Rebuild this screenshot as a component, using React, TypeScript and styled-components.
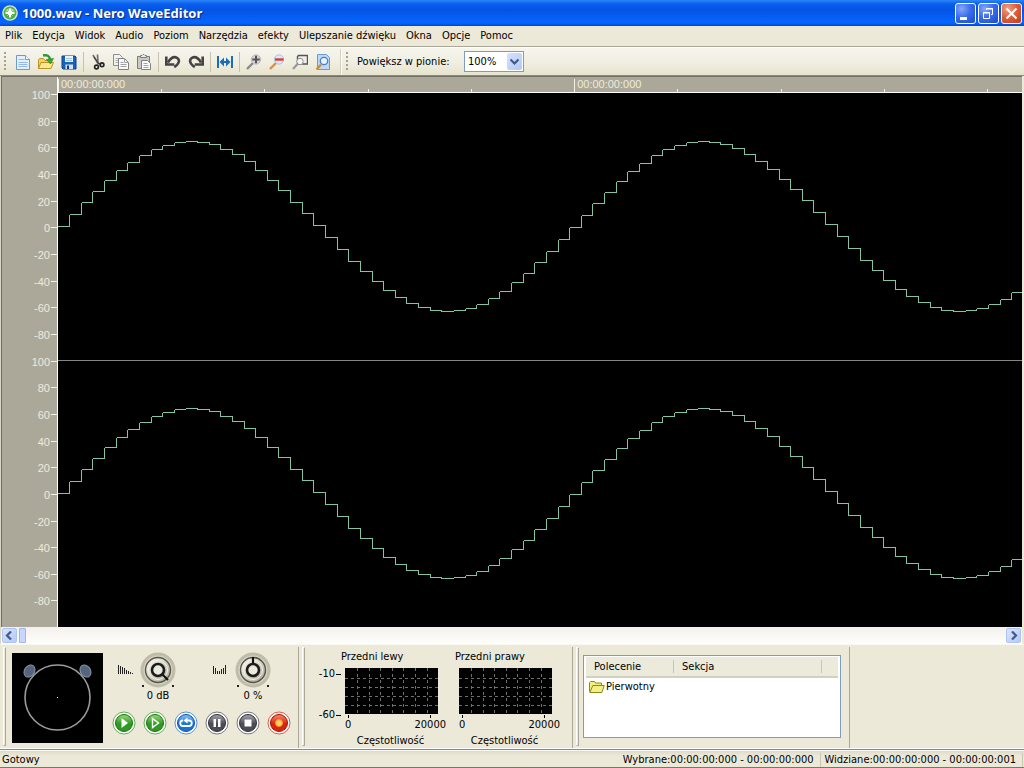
import React from 'react';
import styled, { createGlobalStyle, css } from 'styled-components';

const face = '#ece9d8';
const shade = '#aca899';

const GlobalStyle = createGlobalStyle`
  *, *::before, *::after { box-sizing: border-box; }
  html, body { margin: 0; padding: 0; }
  body {
    background: ${face};
    color: #000;
    font-family: "DejaVu Sans Condensed", "DejaVu Sans", sans-serif;
    font-size: 11px;
    line-height: 14px;
  }
  button, select, input { font: inherit; color: inherit; margin: 0; padding: 0; }
  svg { display: block; }
`;

const Window = styled.div`
  display: flex;
  flex-direction: column;
  min-height: 100vh;
  background: ${face};
  border-bottom: 2px solid #3f80cf;
`;

/* ---------- title bar ---------- */

const TitleBar = styled.header`
  display: flex;
  align-items: center;
  gap: 4px;
  height: 26px;
  padding: 0 2px;
  background: linear-gradient(#2a86f8 0, #0a5fee 4px, #0454e2 10px, #0560f8 18px, #0665ff 23px, #0048c8 26px);
`;

const Title = styled.h1`
  flex: 1;
  margin: 0;
  color: #fff;
  font: bold 13px/18px "Noto Sans", sans-serif;
  text-shadow: 1px 1px 1px #0a2a80;
`;

const CaptionButtons = styled.div`
  display: flex;
  gap: 2px;
`;

const CaptionButton = styled.button<{ $close?: boolean }>`
  width: 21px;
  height: 21px;
  border: 1px solid #fff;
  border-radius: 3px;
  background: ${p => p.$close
    ? 'radial-gradient(circle at 30% 25%, #f0a088 0, #e0603c 45%, #c03a14 100%)'
    : 'radial-gradient(circle at 30% 25%, #84a8f8 0, #3c6cea 45%, #1a48d0 100%)'};
`;

/* ---------- menu ---------- */

const MenuBar = styled.nav`
  display: flex;
  height: 21px;
  padding: 3px 0 0 5px;
  gap: 10px;
  border-bottom: 1px solid ${shade};
`;

const MenuItem = styled.button`
  border: 0;
  background: none;
  height: 14px;
  white-space: nowrap;
`;

/* ---------- toolbar ---------- */

const ToolBar = styled.div`
  display: flex;
  align-items: center;
  height: 29px;
  border-top: 1px solid #fff;
  border-bottom: 1px solid #8c897a;
  background: linear-gradient(#f6f5ee, #f0eee0 55%, #e6e3cd);
`;

const Grip = styled.span`
  width: 2px;
  height: 20px;
  margin: 0 5px 0 4px;
  background: repeating-linear-gradient(#a5a291 0 2px, transparent 2px 4px);
`;

const ToolButton = styled.button`
  display: flex;
  justify-content: center;
  align-items: center;
  width: 23px;
  height: 22px;
  border: 0;
  background: none;
`;

const ToolSeparator = styled.span`
  width: 1px;
  height: 20px;
  margin: 0 2px 0 3px;
  background: #c5c2b0;
`;

const ToolEnd = styled.span`
  width: 2px;
  height: 26px;
  margin-left: 6px;
  background: linear-gradient(90deg, #d3d0bf 50%, #fff 50%);
`;

const ZoomLabel = styled.label`
  margin-left: 4px;
  width: 107px;
`;

const SelectBox = styled.span`
  position: relative;
  width: 60px;
  height: 21px;
`;

const Select = styled.select`
  appearance: none;
  width: 100%;
  height: 100%;
  padding-left: 3px;
  border: 1px solid #7f9db9;
  border-radius: 0;
  background: #fff;
`;

const SelectArrow = styled.span`
  position: absolute;
  right: 2px;
  top: 2px;
  display: grid;
  place-items: center;
  width: 15px;
  height: 17px;
  border-radius: 2px;
  background: linear-gradient(135deg, #d6e2fe, #b3c8f6);
  pointer-events: none;
`;

/* ---------- wave editor ---------- */

const Editor = styled.main`
  flex: 1;
  display: flex;
  flex-direction: column;
  margin-right: 2px;
  border-left: 1px solid #d8d5c5;
`;

const Tracks = styled.div`
  flex: 1;
  display: flex;
  border-left: 1px solid #716f64;
  background: ${shade};
  border-top: 1px solid #716f64;
`;

const Axis = styled.div`
  display: flex;
  flex-direction: column;
  width: 55px;
  padding: 11px 0 6px;
  color: #eeebdc;
  font: 11px/14px "Liberation Sans", sans-serif;
`;

const AxisLabel = styled.div`
  flex: 1;
  min-height: 14px;
  display: flex;
  justify-content: flex-end;
  align-items: flex-start;
  gap: 1px;

  &::after {
    content: '';
    width: 6px;
    height: 1px;
    margin-top: 6px;
    background: #f4f2e6;
  }
`;

const TrackArea = styled.div`
  flex: 1;
  display: flex;
  flex-direction: column;
  border-left: 1px solid #fff;
`;

const Ruler = styled.div`
  display: flex;
  align-items: flex-end;
  height: 16px;
  overflow: hidden;
  border-bottom: 1px solid #fff;
  color: #eeebdc;
  font: 11px/10px "Liberation Sans", sans-serif;
`;

const RulerCell = styled.div<{ $major?: boolean }>`
  flex: 0 0 10.71%;
  height: ${p => (p.$major ? 13 : 3)}px;
  padding-left: 2px;
  border-left: 1px solid #f4f2e6;
  white-space: nowrap;
`;

const WaveView = styled.div`
  flex: 1;
  display: flex;
  min-height: 240px;
  background: #000;

  svg { width: 100%; height: auto; }
`;

const ScrollBar = styled.div`
  display: flex;
  align-items: center;
  height: 17px;
  padding: 0 1px;
  background: linear-gradient(#f3f1ec, #fefefb);
`;

const ScrollButton = styled.button`
  display: grid;
  place-items: center;
  width: 15px;
  height: 15px;
  border: 1px solid #b0c4f4;
  border-radius: 2px;
  background: linear-gradient(135deg, #d8e3fe, #b5caf8);
`;

const ScrollTrack = styled.div`
  flex: 1;
  padding-left: 2px;
`;

const ScrollThumb = styled.div`
  width: 7px;
  height: 15px;
  border: 1px solid #9cb6ec;
  border-radius: 1px;
  background: #c8d8fc;
`;

/* ---------- bottom panels ---------- */

const Dock = styled.footer`
  display: flex;
  height: 106px;
  padding: 2px 0 1px;
  border-top: 1px solid #f8f7f0;
  border-bottom: 1px solid #8c897a;
  box-shadow: inset 0 -1px 0 #fff;
`;

const Panel = styled.section<{ $width: number }>`
  display: flex;
  flex: 0 0 ${p => p.$width}px;
  border-right: 1px solid ${shade};

  &::before {
    content: '';
    width: 3px;
    height: 99px;
    margin-left: 3px;
    border: 1px solid;
    border-color: #fff ${shade} ${shade} #fff;
  }
`;

const ScopeBox = styled.div`
  margin: 6px 0 0 6px;
  width: 91px;
  height: 90px;
  background: #000;
`;

const Transport = styled.div`
  margin-left: 5px;
  width: 187px;
`;

const Knobs = styled.div`
  display: flex;
  gap: 36px;
  padding: 5px 0 0 9px;
  height: 64px;
`;

const KnobField = styled.label`
  display: grid;
  grid-template-columns: 17px 36px;
  grid-template-rows: 36px 16px;
  column-gap: 6px;
  align-items: center;
`;

const KnobDial = styled.span`
  position: relative;
  display: block;
  width: 36px;
  height: 36px;

  input {
    position: absolute;
    inset: 0;
    width: 100%;
    height: 100%;
    opacity: 0;
  }
`;

const KnobValue = styled.span`
  grid-column: 2;
  text-align: center;
  white-space: nowrap;
`;

const TransportButtons = styled.div`
  display: flex;
`;

const RoundButton = styled.button`
  display: grid;
  place-items: center;
  width: 31px;
  height: 24px;
  border: 0;
  background: none;
`;

const Spectra = styled.div`
  display: flex;
  padding: 3px 0 0 7px;
`;

const LevelScale = styled.div`
  display: flex;
  flex-direction: column;
  justify-content: space-between;
  width: 29px;
  height: 55px;
  margin-top: 17px;
`;

const Level = styled.div`
  display: flex;
  justify-content: flex-end;
  align-items: center;
  gap: 1px;

  &::after {
    content: '';
    width: 5px;
    height: 1px;
    background: #000;
  }
`;

const Figure = styled.figure`
  width: 105px;
  margin: 0 9px 0 0;
`;

const FigureTitle = styled.div`
  height: 18px;
  white-space: nowrap;
`;

const Plot = styled.div`
  width: 93px;
  margin-left: 4px;
`;

const FrequencyScale = styled.div`
  display: flex;
  justify-content: space-between;
  padding: 1px 0 0 4px;
`;

const Frequency = styled.span`
  display: flex;
  flex-direction: column;
  align-items: center;
  line-height: 13px;

  &::before {
    content: '';
    width: 1px;
    height: 3px;
    background: #000;
  }
`;

const Caption = styled.figcaption`
  width: 99px;
  text-align: center;
  line-height: 20px;
`;

const HistoryBox = styled.div`
  width: 258px;
  height: 83px;
  margin: 8px 0 0 4px;
  padding: 1px 2px;
  border: 1px solid #7f9db9;
  background: #fff;
`;

const HistoryTable = styled.table`
  width: 100%;
  table-layout: fixed;
  border-collapse: collapse;

  th {
    height: 20px;
    padding: 0 0 0 8px;
    text-align: left;
    font-weight: normal;
    background: linear-gradient(90deg, transparent calc(100% - 1px), #c9c6b4 0) 0 3px / 100% 13px no-repeat, #ebeadb;
    border-bottom: 2px solid #d3d0bf;
  }
  th:last-child { background: #ebeadb; }
  td { padding: 1px 0 0 3px; }
`;

const Entry = styled.span`
  display: flex;
  align-items: center;
  gap: 1px;
  height: 16px;
`;

/* ---------- status bar ---------- */

const StatusBar = styled.div`
  display: flex;
  align-items: center;
  height: 17px;
  padding: 2px 1px 0 2px;
  border-top: 1px solid #f8f7f0;
  background: linear-gradient(#dedbca, ${face} 5px);
`;

const StatusText = styled.span<{ $grow?: boolean }>`
  white-space: nowrap;
  ${p => p.$grow
    ? css`flex: 1;`
    : css`
        padding: 0 6px 0 4px;
        border-right: 1px solid #c9c6b4;
      `}
`;

/* ---------- tool icons ---------- */

const Icon = ({ children }: { children: React.ReactNode }) => (
  <svg width="16" height="16" viewBox="0 0 16 16" fill="none" aria-hidden="true">{children}</svg>
);

const NewIcon = () => (
  <Icon>
    <path d="M1.5 1.5h9l4 4v10h-13z" fill="#e4f0fe" stroke="#6d9bd0" />
    <path d="M10.5 1.5v4h4" fill="#fff" stroke="#6d9bd0" />
    <path d="M3.5 5.5h6M3.5 8.5h9M3.5 10.5h9M3.5 12.5h9" stroke="#92bbe8" />
  </Icon>
);

const OpenIcon = () => (
  <Icon>
    <path d="M.5 14.5v-9l1-1h4l1.5 2h6v3" fill="#f2d45c" stroke="#b8922a" />
    <path d="M.5 14.5 3 8.5h12.5l-2.5 6z" fill="#fbe98c" stroke="#b8922a" />
    <path d="M5 1.5c4-1 6.5 .5 7 4" stroke="#2f9a2c" strokeWidth="2.4" />
    <path d="m8.5 5.5 4 4.5 3-5.5z" fill="#3aa836" stroke="#1e7a1e" strokeWidth=".6" />
  </Icon>
);

const SaveIcon = () => (
  <Icon>
    <path d="M1 2h13l1 1v12H2l-1-1z" fill="#1763b8" stroke="#0d4488" />
    <path d="M4 2h8v6H4z" fill="#eaf4ff" />
    <path d="M5 4.5h6M5 6.5h6" stroke="#9bc0e6" />
    <path d="M4.5 10.5h7.500V15H4.500z" fill="#d4e2f0" />
    <path d="M6 11.5h2V15H6z" fill="#0d3a78" />
  </Icon>
);

const CutIcon = () => (
  <Icon>
    <path d="m3 1 5.5 9.500M7.500 .5 8 10M8 9l3.500 1.500" stroke="#6d6d6d" strokeWidth="1.7" />
    <path d="m4 3 5 7" stroke="#333" strokeWidth="1" />
    <circle cx="6.5" cy="13" r="1.9" stroke="#222" strokeWidth="1.6" />
    <circle cx="12" cy="10.8" r="1.9" stroke="#222" strokeWidth="1.6" />
  </Icon>
);

const CopyIcon = () => (
  <Icon>
    <path d="M.5 .5h6l3 3v8h-9z" fill="#f2f2f0" stroke="#8d8d8d" />
    <path d="M2.5 4.5h5M2.5 6.5h5M2.5 8.5h5" stroke="#b0b0b0" />
    <path d="M5.5 4.5h6l4 4v7h-10z" fill="#fafafa" stroke="#808080" />
    <path d="M11.5 4.5v4h4M7.5 8.5h3M7.5 10.5h6M7.5 12.5h6" stroke="#a0a0a0" />
  </Icon>
);

const PasteIcon = () => (
  <Icon>
    <path d="M1.5 2.5h12v12h-12z" fill="#c9c9c6" stroke="#7c7c7c" />
    <path d="M4.5 3.5v-2h1.5l1-1h1l1 1h1.5v2z" fill="#eee" stroke="#7c7c7c" />
    <path d="M5.5 6.5h6l3 3v6h-9z" fill="#fbfbfb" stroke="#808080" />
    <path d="M7.5 9.5h4M7.5 11.5h5M7.5 13.5h5" stroke="#a6a6a6" />
  </Icon>
);

const UndoShape = () => (
  <>
    <path d="M3 8.5C6 3.5 9.5 2.5 12 3.8c3.2 1.9 2.4 6.2-2.8 9.2" stroke="#444" strokeWidth="2.6" />
    <path d="M1.3 2.5v8h8" stroke="#444" strokeWidth="2.6" />
  </>
);

const UndoIcon = () => <Icon><UndoShape /></Icon>;
const RedoIcon = () => <Icon><g transform="matrix(-1 0 0 1 16 0)"><UndoShape /></g></Icon>;

const FitIcon = () => (
  <Icon>
    <path d="M1 2v12M15 2v12" stroke="#1c6cb8" strokeWidth="2" />
    <path d="M4 8h8" stroke="#1c6cb8" strokeWidth="2" />
    <path d="M7 3.5 2.5 8 7 12.5zM9 3.5 13.5 8 9 12.5z" fill="#1c6cb8" />
  </Icon>
);

const ZoomInIcon = () => (
  <Icon>
    <path d="m7 9-6 6" stroke="#8a8a8a" strokeWidth="2.4" />
    <circle cx="10" cy="5.5" r="4.6" fill="#d6d6d6" stroke="#b4b4b4" />
    <path d="M10 1.8v7.4M6.3 5.5h7.4" stroke="#555" strokeWidth="2" />
  </Icon>
);

const ZoomOutIcon = () => (
  <Icon>
    <path d="m7 9-6 6" stroke="#dd8f3c" strokeWidth="2.4" />
    <circle cx="10" cy="5.5" r="4.6" fill="#dbe9fa" stroke="#a5c0e2" />
    <path d="M6 5.5h8.5" stroke="#e03a2c" strokeWidth="2.4" />
  </Icon>
);

const ZoomSelectionIcon = () => (
  <Icon>
    <path d="M5.5 10V2.5l1-1h9V10z" fill="#ececea" stroke="#555" strokeWidth="1.4" />
    <circle cx="8" cy="7.5" r="3.2" fill="#f6f6f4" stroke="#909090" />
    <path d="m5.5 10-4.5 5" stroke="#999" strokeWidth="2.2" />
  </Icon>
);

const ZoomAllIcon = () => (
  <Icon>
    <path d="M2.5 .5h9l3 3v12h-12z" fill="#bdd9f5" stroke="#6a9ad0" />
    <circle cx="9" cy="7" r="3.7" fill="#e6f3ff" stroke="#4a80be" strokeWidth="1.3" />
    <path d="m6 10.5-4.5 5" stroke="#c98a3a" strokeWidth="2.2" />
  </Icon>
);

const Chevron = ({ d }: { d: string }) => (
  <svg width="9" height="9" viewBox="0 0 9 9" fill="none" aria-hidden="true">
    <path d={d} stroke="#3f5a88" strokeWidth="2.2" />
  </svg>
);

const AppIcon = () => (
  <Icon>
    <circle cx="8" cy="8" r="7.8" fill="#d9e6d4" />
    <circle cx="8" cy="8" r="6.4" fill="#4fae44" />
    <path d="M3 6.5a5.5 5.5 0 0 1 10 0z" fill="#9ad68c" />
    <path d="M8 3.5v9M3.5 8h9" stroke="#fff" strokeWidth="2" />
    <path d="m5.5 5.5 5 5M10.5 5.5l-5 5" stroke="#eaf8e6" />
  </Icon>
);

const FolderIcon = () => (
  <Icon>
    <path d="M.5 12.5v-9l1-1h4l1 1.5h6v3" fill="#f4ee7a" stroke="#8b8a16" />
    <path d="m.8 13.5 3-7h11.5l-2.5 7z" fill="#f3ef86" stroke="#8b8a16" />
  </Icon>
);

/* ---------- transport icons ---------- */

const tones = {
  green: ['#9ada7c', '#2f9a22', '#1d6e14'],
  blue: ['#86c4f6', '#1c74d2', '#0d4fa4'],
  gray: ['#a8a8b0', '#4c4c54', '#303036'],
  red: ['#f88a68', '#d8260e', '#a01402'],
};

const RoundIcon = ({ tone, children }: { tone: keyof typeof tones; children: React.ReactNode }) => {
  const [light, mid, dark] = tones[tone];
  const id = `tone-${tone}`;
  return (
    <svg width="24" height="24" viewBox="0 0 24 24" fill="none" aria-hidden="true">
      <defs>
        <linearGradient id={id} x1="0" y1="0" x2="0" y2="1">
          <stop offset="0" stopColor={light} />
          <stop offset=".55" stopColor={mid} />
          <stop offset="1" stopColor={mid} />
        </linearGradient>
      </defs>
      <circle cx="12" cy="12" r="11" fill="#fff" stroke={mid} strokeOpacity=".75" />
      <circle cx="12" cy="12" r="8.5" fill={`url(#${id})`} stroke={dark} />
      {children}
    </svg>
  );
};

const transport = [
  { name: 'Odtwórz', tone: 'green' as const, mark: <path d="M9.5 7v10l6.5-5z" fill="#fff" /> },
  { name: 'Odtwórz zaznaczenie', tone: 'green' as const, mark: <path d="M9.5 7.5v9l6-4.5z" stroke="#fff" strokeWidth="1.4" /> },
  {
    name: 'Pętla', tone: 'blue' as const,
    mark: (
      <>
        <path d="M9 9.5H8.5a2.8 2.8 0 0 0 0 5.5h7a2.8 2.8 0 0 0 0-5.5H13" stroke="#fff" strokeWidth="1.8" />
        <path d="M13.5 6.5v6l-4-3z" fill="#fff" />
      </>
    ),
  },
  { name: 'Pauza', tone: 'gray' as const, mark: <path d="M8.5 8H11v8H8.5zM13 8h2.5v8H13z" fill="#fff" /> },
  { name: 'Zatrzymaj', tone: 'gray' as const, mark: <path d="M8.5 8.5h7v7h-7z" fill="#fff" /> },
  { name: 'Nagraj', tone: 'red' as const, mark: <circle cx="12" cy="12" r="3.5" fill="#ffd060" stroke="#ff9030" /> },
];

/* ---------- knobs ---------- */

const KnobDrawing = ({ pointer }: { pointer: string }) => (
  <svg width="36" height="36" viewBox="0 0 36 36" fill="none" aria-hidden="true">
    <defs>
      <linearGradient id="knob-face" x1="0" y1="0" x2="1" y2="1">
        <stop offset="0" stopColor="#fffef4" />
        <stop offset="1" stopColor="#a8a490" />
      </linearGradient>
    </defs>
    <circle cx="18" cy="18" r="16" fill="#d6d3c1" stroke="#bfbcaa" strokeWidth="3" />
    <circle cx="18" cy="18" r="12.5" fill="url(#knob-face)" stroke="#55534a" strokeWidth="1.4" />
    <circle cx="18" cy="18" r="9.5" stroke="#f4f2e6" />
    <path d={pointer} stroke="#111" strokeWidth="2.2" />
    <circle cx="18" cy="18" r="6" fill="#eceadc" stroke="#1c1c1a" strokeWidth="2.6" />
    <path d="M2 33h2v2H2zM32 33h2v2h-2z" fill="#222" />
  </svg>
);

const Bars = ({ heights }: { heights: number[] }) => (
  <svg width="17" height="10" viewBox="0 0 17 10" aria-hidden="true">
    {heights.map((h, i) => <rect key={i} x={i * 2 + 1} y={9 - h} width="1" height={h} fill="#222" />)}
  </svg>
);

const knobs = [
  { name: 'Głośność', value: '0 dB', bars: [9, 8, 7, 6, 4, 3, 2, 1], pointer: 'm22 22 6 6' },
  { name: 'Balans', value: '0 %', bars: [8, 6, 3, 3, 5, 6, 9], pointer: 'M18 12V5' },
];

const Scope = () => (
  <svg width="91" height="90" viewBox="0 0 91 90" fill="none" role="img" aria-label="Pozycja głośników">
    <circle cx="45.5" cy="44.5" r="32.5" stroke="#9c9c9c" strokeWidth="1.6" />
    <ellipse cx="17.5" cy="18" rx="5" ry="6.5" transform="rotate(35 17.5 18)" fill="#56657c" stroke="#8496ae" />
    <ellipse cx="73.5" cy="18" rx="5" ry="6.5" transform="rotate(-35 73.5 18)" fill="#56657c" stroke="#8496ae" />
    <rect x="45" y="44" width="1" height="1" fill="#fff" />
  </svg>
);

const PlotGrid = () => (
  <svg width="93" height="46" viewBox="0 0 93 46" shapeRendering="crispEdges" role="img" aria-label="Widmo">
    <rect width="93" height="46" fill="#000" />
    <path
      d="M12.5 0v46M24.5 0v46M35.5 0v46M47.5 0v46M58.5 0v46M70.5 0v46M82.5 0v46M0 10.5h93M0 19.5h93M0 28.5h93M0 37.5h93"
      stroke="#707070" strokeDasharray="3 3"
    />
  </svg>
);

/* ---------- wave form ---------- */

const STEP = 11.63;
const SAMPLES_PER_PERIOD = 44.1;

function samplePath(zero: number) {
  let d = '';
  for (let k = 0; k < 83; k++) {
    const y = Math.round(zero - 85 * Math.sin((2 * Math.PI * k) / SAMPLES_PER_PERIOD)) + 0.5;
    const start = Math.floor(k * STEP) + 0.5;
    const end = k === 82 ? 964 : Math.floor((k + 1) * STEP) + 0.5;
    d += k === 0 ? `M0 ${y}H${end}` : `M${start} ${y}H${end}`;
    if (k > 0) {
      const before = Math.round(zero - 85 * Math.sin((2 * Math.PI * (k - 1)) / SAMPLES_PER_PERIOD)) + 0.5;
      d += `M${start} ${before}V${y}`;
    }
  }
  return d;
}

const WaveForm = () => (
  <svg viewBox="0 0 964 534" preserveAspectRatio="none" fill="none" shapeRendering="crispEdges" role="img" aria-label="Przebieg fali">
    <path d="M0 267.5H964" stroke="#868686" vectorEffect="non-scaling-stroke" />
    <path d={samplePath(133) + samplePath(400)} stroke="#86c2a4" vectorEffect="non-scaling-stroke" />
  </svg>
);

/* ---------- page ---------- */

const menu = ['Plik', 'Edycja', 'Widok', 'Audio', 'Poziom', 'Narzędzia', 'efekty', 'Ulepszanie dźwięku', 'Okna', 'Opcje', 'Pomoc'];

const toolGroups: [string, React.FC][][] = [
  [['Nowy', NewIcon], ['Otwórz', OpenIcon], ['Zapisz', SaveIcon]],
  [['Wytnij', CutIcon], ['Kopiuj', CopyIcon], ['Wklej', PasteIcon]],
  [['Cofnij', UndoIcon], ['Ponów', RedoIcon]],
  [['Dopasuj', FitIcon]],
  [['Powiększ', ZoomInIcon], ['Pomniejsz', ZoomOutIcon], ['Powiększ zaznaczenie', ZoomSelectionIcon], ['Pokaż całość', ZoomAllIcon]],
];

const levels = [100, 80, 60, 40, 20, 0, -20, -40, -60, -80];
const rulerCells = Array.from({ length: 10 }, (_, i) => i % 5 === 0);

export default function App() {
  return (
    <>
      <GlobalStyle />
      <Window>
        <TitleBar>
          <AppIcon />
          <Title>1000.wav - Nero WaveEditor</Title>
          <CaptionButtons>
            <CaptionButton aria-label="Minimalizuj">
              <svg width="19" height="19" viewBox="0 0 19 19"><path d="M4 13h7v3H4z" fill="#fff" /></svg>
            </CaptionButton>
            <CaptionButton aria-label="Przywróć">
              <svg width="19" height="19" viewBox="0 0 19 19" fill="none" stroke="#fff">
                <path d="M4.5 8.5h6v6h-6zM4 9h7M7.5 6V4.5h6v6H12M7 5h7" />
              </svg>
            </CaptionButton>
            <CaptionButton $close aria-label="Zamknij">
              <svg width="19" height="19" viewBox="0 0 19 19"><path d="m4.5 4.5 10 10M14.5 4.5l-10 10" stroke="#fff" strokeWidth="2.2" /></svg>
            </CaptionButton>
          </CaptionButtons>
        </TitleBar>

        <MenuBar>
          {menu.map(item => <MenuItem key={item}>{item}</MenuItem>)}
        </MenuBar>

        <ToolBar>
          <Grip />
          {toolGroups.map((group, i) => (
            <React.Fragment key={i}>
              {i > 0 && <ToolSeparator />}
              {group.map(([name, Glyph]) => (
                <ToolButton key={name} aria-label={name}><Glyph /></ToolButton>
              ))}
            </React.Fragment>
          ))}
          <ToolEnd />
          <Grip />
          <ZoomLabel htmlFor="vertical-zoom">Powiększ w pionie:</ZoomLabel>
          <SelectBox>
            <Select id="vertical-zoom" defaultValue="100%">
              <option>100%</option>
              <option>200%</option>
            </Select>
            <SelectArrow><Chevron d="M.5 2.5l4 4 4-4" /></SelectArrow>
          </SelectBox>
        </ToolBar>

        <Editor>
          <Tracks>
            <Axis>
              {[0, 1].map(channel => levels.map(level => (
                <AxisLabel key={`${channel}:${level}`}>{level}</AxisLabel>
              )))}
            </Axis>
            <TrackArea>
              <Ruler>
                {rulerCells.map((major, i) => (
                  <RulerCell key={i} $major={major}>{major ? '00:00:00:000' : null}</RulerCell>
                ))}
              </Ruler>
              <WaveView><WaveForm /></WaveView>
            </TrackArea>
          </Tracks>
          <ScrollBar>
            <ScrollButton aria-label="W lewo"><Chevron d="M6 .5l-4 4 4 4" /></ScrollButton>
            <ScrollTrack><ScrollThumb /></ScrollTrack>
            <ScrollButton aria-label="W prawo"><Chevron d="M3 .5l4 4-4 4" /></ScrollButton>
          </ScrollBar>
        </Editor>

        <Dock>
          <Panel $width={299}>
            <ScopeBox><Scope /></ScopeBox>
            <Transport>
              <Knobs>
                {knobs.map(knob => (
                  <KnobField key={knob.name}>
                    <Bars heights={knob.bars} />
                    <KnobDial>
                      <KnobDrawing pointer={knob.pointer} />
                      <input type="range" aria-label={knob.name} />
                    </KnobDial>
                    <KnobValue>{knob.value}</KnobValue>
                  </KnobField>
                ))}
              </Knobs>
              <TransportButtons>
                {transport.map(({ name, tone, mark }) => (
                  <RoundButton key={name} aria-label={name}>
                    <RoundIcon tone={tone}>{mark}</RoundIcon>
                  </RoundButton>
                ))}
              </TransportButtons>
            </Transport>
          </Panel>

          <Panel $width={274}>
            <Spectra>
              <LevelScale>
                <Level>-10</Level>
                <Level>-60</Level>
              </LevelScale>
              {['Przedni lewy', 'Przedni prawy'].map(name => (
                <Figure key={name}>
                  <FigureTitle>{name}</FigureTitle>
                  <Plot><PlotGrid /></Plot>
                  <FrequencyScale>
                    <Frequency>0</Frequency>
                    <Frequency>20000</Frequency>
                  </FrequencyScale>
                  <Caption>Częstotliwość</Caption>
                </Figure>
              ))}
            </Spectra>
          </Panel>

          <Panel $width={277}>
            <HistoryBox>
              <HistoryTable>
                <colgroup>
                  <col width="88" />
                  <col width="148" />
                  <col />
                </colgroup>
                <thead>
                  <tr><th>Polecenie</th><th>Sekcja</th><th aria-label="Inne" /></tr>
                </thead>
                <tbody>
                  <tr><td colSpan={3}><Entry><FolderIcon />Pierwotny</Entry></td></tr>
                </tbody>
              </HistoryTable>
            </HistoryBox>
          </Panel>
        </Dock>

        <StatusBar>
          <StatusText $grow>Gotowy</StatusText>
          <StatusText>Wybrane:00:00:00:000 - 00:00:00:000</StatusText>
          <StatusText>Widziane:00:00:00:000 - 00:00:00:001</StatusText>
        </StatusBar>
      </Window>
    </>
  );
}
